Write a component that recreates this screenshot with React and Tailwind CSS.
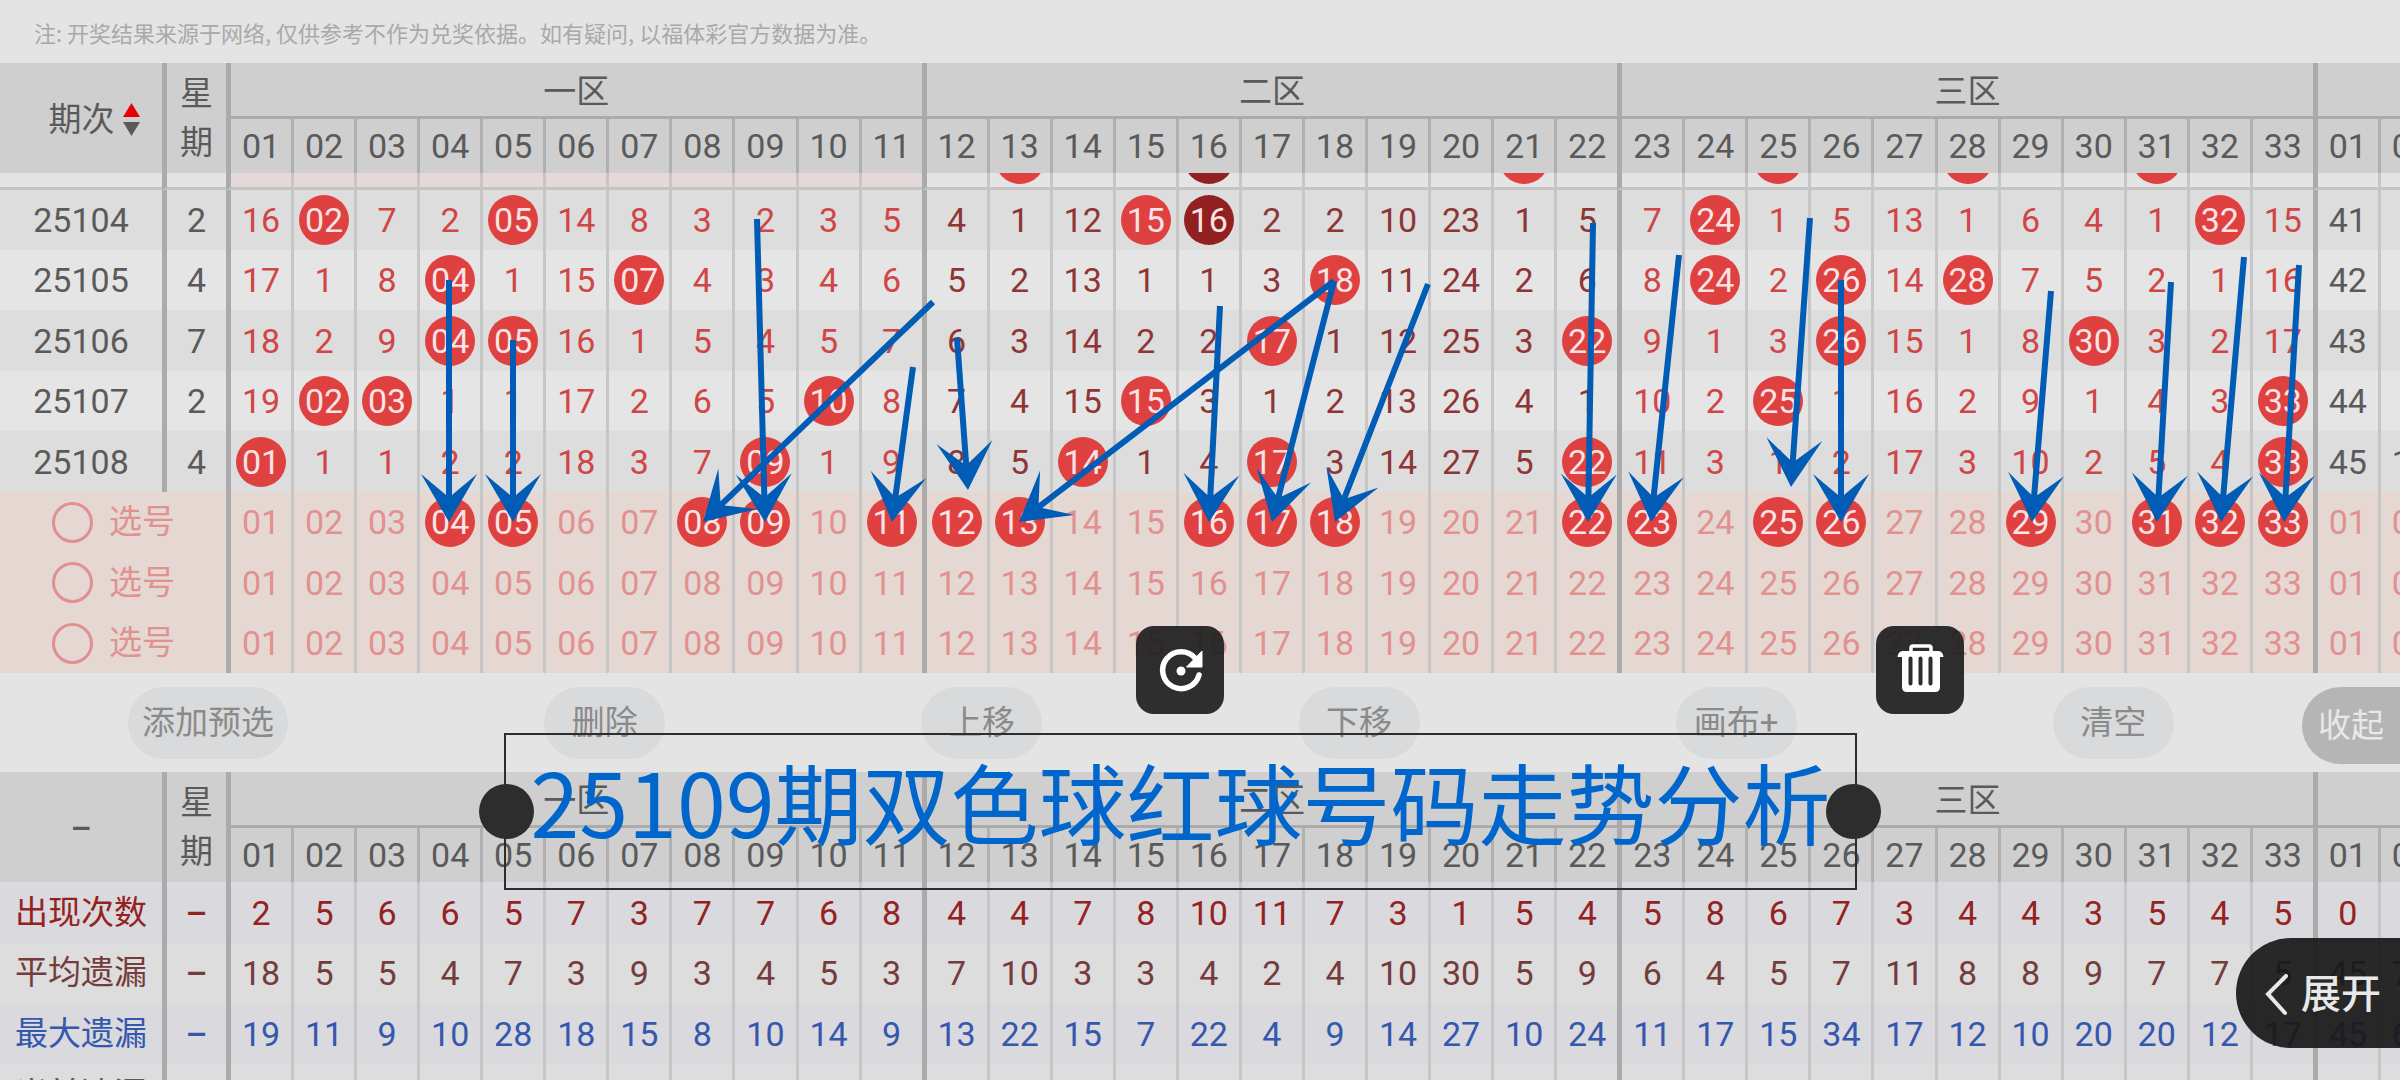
import { useState } from "react";

const pad = (n) => String(n).padStart(2, "0");
const COLUMNS = Array.from({ length: 35 }, (_, i) => i);
const ZONES = ["一区", "二区", "三区"];

// "*" marks a drawn ball, "!" marks a repeated one
const DRAWS = [
  {
    id: "25104",
    week: "2",
    cells:
      "16 *02 7 2 *05 14 8 3 2 3 5 4 1 12 *15 !16 2 2 10 23 1 5 7 *24 1 5 13 1 6 4 1 *32 15 41 6",
  },
  {
    id: "25105",
    week: "4",
    cells:
      "17 1 8 *04 1 15 *07 4 3 4 6 5 2 13 1 1 3 *18 11 24 2 6 8 *24 2 *26 14 *28 7 5 2 1 16 42 7",
  },
  {
    id: "25106",
    week: "7",
    cells:
      "18 2 9 *04 *05 16 1 5 4 5 7 6 3 14 2 2 *17 1 12 25 3 *22 9 1 3 *26 15 1 8 *30 3 2 17 43 8",
  },
  {
    id: "25107",
    week: "2",
    cells:
      "19 *02 *03 1 1 17 2 6 5 *10 8 7 4 15 *15 3 1 2 13 26 4 1 10 2 *25 1 16 2 9 1 4 3 *33 44 9",
  },
  {
    id: "25108",
    week: "4",
    cells:
      "*01 1 1 2 2 18 3 7 *09 1 9 8 5 *14 1 4 *17 3 14 27 5 *22 11 3 1 2 17 3 10 2 5 4 *33 45 10",
  },
];

const STATS = [
  {
    label: "出现次数",
    color: "text-[#952222]",
    bg: "bg-[#d9d9de]",
    cells: "2 5 6 6 5 7 3 7 7 6 8 4 4 7 8 10 11 7 3 1 5 4 5 8 6 7 3 4 4 3 5 4 5 0 1",
  },
  {
    label: "平均遗漏",
    color: "text-[#743c3c]",
    bg: "bg-[#dddddd]",
    cells: "18 5 5 4 7 3 9 3 4 5 3 7 10 3 3 4 2 4 10 30 5 9 6 4 5 7 11 8 8 9 7 7 5 45 75",
  },
  {
    label: "最大遗漏",
    color: "text-[#3558ad]",
    bg: "bg-[#d9d9de]",
    cells:
      "19 11 9 10 28 18 15 8 10 14 9 13 22 15 7 22 4 9 14 27 10 24 11 17 15 34 17 12 10 20 20 12 17 45 60",
  },
  {
    label: "当前遗漏",
    color: "text-[#5a5a5a]",
    bg: "bg-[#dddddd]",
    cells: "0 1 1 2 2 18 3 7 0 1 9 8 5 0 1 4 0 3 14 27 5 0 11 3 1 2 17 3 10 2 5 4 0 45 10",
  },
];

const PREVIOUS = { 13: "*", 16: "!", 21: "*", 25: "*", 28: "*", 31: "*" };
const PICKS = [4, 5, 8, 9, 11, 12, 13, 16, 17, 18, 22, 23, 25, 26, 29, 31, 32, 33];
const ACTIONS = ["添加预选", "删除", "上移", "下移", "画布+", "清空"];

// x1, y1, x2, y2
const ARROWS = [
  [449, 280, 449, 522],
  [513, 340, 513, 522],
  [757, 219, 765, 522],
  [933, 302, 703, 522],
  [913, 367, 892, 522],
  [957, 338, 968, 490],
  [1334, 281, 1019, 522],
  [1220, 306, 1209, 522],
  [1334, 281, 1272, 522],
  [1428, 284, 1335, 522],
  [1593, 223, 1588, 522],
  [1679, 255, 1651, 522],
  [1810, 218, 1791, 487],
  [1841, 280, 1841, 522],
  [2051, 291, 2032, 522],
  [2171, 282, 2157, 522],
  [2244, 257, 2221, 522],
  [2299, 265, 2284, 522],
];

function lineClass(i, header) {
  if (i % 11 === 0) return "border-l-5 border-[#ababab]";
  return header ? "border-l-3 border-[#b0b0b0]" : "border-l-3 border-[#c6c6c6]";
}

function zoneColor(i) {
  if (i >= 33) return "text-[#5a5a5a]";
  return i >= 11 && i < 22 ? "text-[#8e3535]" : "text-[#d04545]";
}

function Ball({ repeated, children }) {
  return (
    <span
      className={`mx-auto flex size-[50px] shrink-0 items-center justify-center rounded-full text-[#f8e4e4] ${
        repeated ? "bg-[#922020]" : "bg-[#df4040]"
      }`}
    >
      {children}
    </span>
  );
}

function Columns() {
  return (
    <colgroup>
      <col className="w-[162px]" />
      <col className="w-[64px]" />
      {COLUMNS.map((i) => (
        <col key={i} className={i % 11 === 0 ? "w-[65px]" : ""} />
      ))}
    </colgroup>
  );
}

function Head({ children }) {
  return (
    <thead className="bg-[#cfcfcf] text-[#5a5a5a]">
      <tr className="h-[56px] text-[33px]">
        <th rowSpan={2} className="pt-1 font-normal">
          {children}
        </th>
        <th rowSpan={2} className="border-l-5 border-[#ababab] px-3 leading-[49px] font-normal">
          星<br />期
        </th>
        {ZONES.map((zone) => (
          <th
            key={zone}
            colSpan={11}
            className="border-b-3 border-l-5 border-[#ababab] pt-1 font-normal"
          >
            {zone}
          </th>
        ))}
        <th colSpan={2} className="border-b-3 border-l-5 border-[#ababab]"></th>
      </tr>
      <tr className="h-[54px]">
        {COLUMNS.map((i) => (
          <th key={i} className={`font-normal ${lineClass(i, true)}`}>
            {pad((i % 33) + 1)}
          </th>
        ))}
      </tr>
    </thead>
  );
}

function PickRow({ index, picks, onToggle }) {
  return (
    <tr className={`bg-[#e5d8d2] text-[#e29191] ${index === 1 ? "h-[61px]" : "h-[60px]"}`}>
      <td colSpan={2}>
        <label className="flex items-center gap-4 pl-13 text-[33px]">
          <input
            type="radio"
            name="pick"
            className="size-[41px] appearance-none rounded-full border-3 border-[#e09090]"
          />
          选号
        </label>
      </td>
      {COLUMNS.map((i) => (
        <td key={i} className={lineClass(i, false)}>
          <button type="button" onClick={() => onToggle(i + 1)} className="block w-full">
            {picks.includes(i + 1) ? <Ball>{pad(i + 1)}</Ball> : pad((i % 33) + 1)}
          </button>
        </td>
      ))}
    </tr>
  );
}

function Arrow({ x1, y1, x2, y2 }) {
  const length = Math.hypot(x2 - x1, y2 - y1);
  const angle = (Math.atan2(y2 - y1, x2 - x1) * 180) / Math.PI;
  return (
    <path
      transform={`translate(${x2} ${y2}) rotate(${angle})`}
      d={`M0 0 L-48 -28 L-27 -3 H${-length} V3 H-27 L-48 28 Z`}
    />
  );
}

export default function App() {
  const [picks, setPicks] = useState(PICKS);

  const togglePick = (n) => {
    setPicks(picks.includes(n) ? picks.filter((p) => p !== n) : [...picks, n]);
  };

  return (
    <div className="relative h-screen overflow-hidden bg-[#e4e4e4] font-['Roboto','Noto_Sans_CJK_SC',sans-serif] text-[33px] leading-10">
      <p className="flex h-[63px] items-center pl-[34px] font-['Noto_Sans_CJK_SC',sans-serif] text-[22px] text-[#a9a9a9]">
        注: 开奖结果来源于网络, 仅供参考不作为兑奖依据。如有疑问, 以福体彩官方数据为准。
      </p>

      {/* Draw history */}
      <table className="w-[calc(100%+41px)] table-fixed border-separate border-spacing-0 text-center text-[34px] [&_td]:p-0">
        <Columns />
        <Head>
          <span className="flex items-center justify-center gap-2 pl-[26px]">
            期次
            <svg width="17" height="34" viewBox="0 0 17 34">
              <path d="M8.5 0 L17 14 H0 Z" fill="#e60000" />
              <path d="M0 19 H17 L8.5 33 Z" fill="#5a5a5a" />
            </svg>
          </span>
        </Head>
        <tbody>
          <tr className="h-[17px]">
            <td className="border-b-3 border-[#c4c4c4]"></td>
            <td className="border-b-3 border-l-5 border-[#c4c4c4] border-l-[#ababab]"></td>
            {COLUMNS.map((i) => (
              <td
                key={i}
                className={`border-b-3 border-b-[#c4c4c4] ${lineClass(i, false)} ${
                  i < 11 ? "bg-[#e5d8d8]" : ""
                }`}
              >
                <div className="flex h-[14px] items-end overflow-hidden pb-[3px]">
                  {PREVIOUS[i + 1] && <Ball repeated={PREVIOUS[i + 1] === "!"} />}
                </div>
              </td>
            ))}
          </tr>
          {DRAWS.map((draw, r) => (
            <tr
              key={draw.id}
              className={`${r % 2 === 0 ? "bg-[#dddddd]" : "bg-[#e5e5e5]"} ${
                r === 2 || r === 4 ? "h-[61px]" : "h-[60px]"
              }`}
            >
              <td className="text-[#5a5a5a]">{draw.id}</td>
              <td className="border-l-5 border-[#ababab] text-[#5a5a5a]">{draw.week}</td>
              {draw.cells.split(" ").map((cell, i) => (
                <td key={i} className={`${lineClass(i, false)} ${zoneColor(i)}`}>
                  {/^[*!]/.test(cell) ? (
                    <Ball repeated={cell[0] === "!"}>{cell.slice(1)}</Ball>
                  ) : (
                    cell
                  )}
                </td>
              ))}
            </tr>
          ))}
          {[0, 1, 2].map((n) => (
            <PickRow key={n} index={n} picks={n === 0 ? picks : []} onToggle={togglePick} />
          ))}
        </tbody>
      </table>

      {/* Toolbar */}
      <div className="flex h-[99px] pt-[14px] text-[#8a8a8a]">
        <div className="flex flex-1 items-start justify-around">
          {ACTIONS.map((action) => (
            <button
              key={action}
              type="button"
              className="h-[72px] min-w-[121px] rounded-full bg-[#d8dadc] px-[14px]"
            >
              {action}
            </button>
          ))}
        </div>
        <button
          type="button"
          className="h-[77px] w-[98px] rounded-l-full bg-[#b5b5b5] text-[#e8e8e8]"
        >
          收起
        </button>
      </div>

      {/* Statistics */}
      <table className="w-[calc(100%+41px)] table-fixed border-separate border-spacing-0 text-center text-[34px] [&_td]:p-0">
        <Columns />
        <Head>
          <span className="font-medium">–</span>
        </Head>
        <tbody>
          {STATS.map((stat, r) => (
            <tr
              key={stat.label}
              className={`${stat.color} ${stat.bg} ${r === 1 ? "h-[60px]" : "h-[61px]"}`}
            >
              <td className="text-[33px]">{stat.label}</td>
              <td className="border-l-5 border-[#ababab] font-medium">–</td>
              {stat.cells.split(" ").map((cell, i) => (
                <td key={i} className={lineClass(i, false)}>
                  {cell}
                </td>
              ))}
            </tr>
          ))}
        </tbody>
      </table>

      {/* Drawn arrows */}
      <svg
        className="pointer-events-none absolute top-0 left-0"
        width="2400"
        height="1080"
        viewBox="0 0 2400 1080"
        fill="#005cb5"
      >
        {ARROWS.map(([x1, y1, x2, y2], i) => (
          <Arrow key={i} x1={x1} y1={y1} x2={x2} y2={y2} />
        ))}
      </svg>

      {/* Text annotation */}
      <div className="absolute top-[733px] left-[504px] flex h-[157px] w-[1353px] items-center justify-center border-2 border-[#2d2d2d] pb-6">
        <h1 className="font-['Noto_Sans_CJK_SC',sans-serif] text-[88px] leading-none whitespace-nowrap text-[#0066cc]">
          25109期双色球红球号码走势分析
        </h1>
        <span className="absolute top-[49px] -left-[27px] size-[55px] rounded-full bg-[#2d2d2d]" />
        <span className="absolute top-[49px] -right-[26px] size-[55px] rounded-full bg-[#2d2d2d]" />
      </div>

      <button
        type="button"
        aria-label="旋转"
        className="absolute top-[626px] left-[1136px] size-[88px] rounded-[18px] bg-[#1e1e1e]/92"
      >
        <svg viewBox="0 0 88 88" fill="none">
          <path
            d="M59.5 32.5 A18.5 18.5 0 1 0 63 49"
            stroke="#fff"
            strokeWidth="5.5"
            strokeLinecap="round"
          />
          <path d="M66 25 V41 H50.5 Z" fill="#fff" stroke="#fff" strokeLinejoin="round" />
          <circle cx="45" cy="45" r="4.5" fill="#fff" />
        </svg>
      </button>
      <button
        type="button"
        aria-label="删除文字"
        className="absolute top-[626px] left-[1876px] size-[88px] rounded-[18px] bg-[#1e1e1e]/92"
      >
        <svg viewBox="0 0 88 88" fill="none">
          <path d="M35 27 V22 Q35 20 37 20 H53 Q55 20 55 22 V27" stroke="#fff" strokeWidth="3.5" />
          <path
            d="M26 25 H63 Q67 26 67.5 31 H64 V61 Q64 66 59 66 H31 Q26 66 26 61 V31 H21.5 Q22 26 26 25 Z"
            fill="#fff"
          />
          <path
            d="M34.5 32.5 V57.5 M44.5 32.5 V57.5 M54.5 32.5 V57.5"
            stroke="#2d2d2d"
            strokeWidth="4"
            strokeLinecap="round"
          />
        </svg>
      </button>

      <button
        type="button"
        className="absolute top-[938px] right-0 flex h-[110px] w-[164px] items-center rounded-l-full bg-[#181818]/92 pt-1 pl-[29px] text-[40px] font-medium text-[#e8e8e8]"
      >
        <svg width="24" height="42" viewBox="0 0 24 42" fill="none" className="mr-3">
          <path d="M21 2 L3 20 L20 39" stroke="#e8e8e8" strokeWidth="4" strokeLinecap="round" />
        </svg>
        展开
      </button>
    </div>
  );
}
